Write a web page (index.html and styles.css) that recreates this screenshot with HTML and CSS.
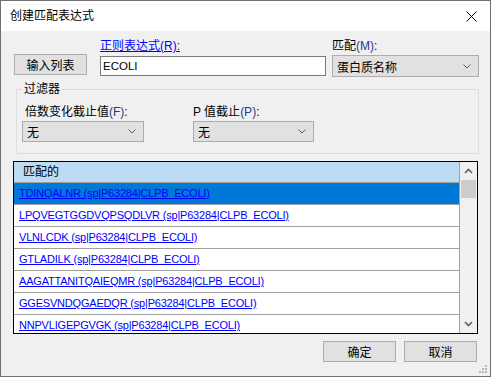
FILE: index.html
```html
<!DOCTYPE html>
<html lang="zh-CN">
<head>
    <meta charset="UTF-8">
    <title>创建匹配表达式</title>
    <link rel="stylesheet" href="styles.css">
</head>
<body>
    <div class="window">
        <!-- Title bar -->
        <div class="titlebar">
            <span class="title">创建匹配表达式</span>
            <span class="close">
                <svg width="11" height="11" viewBox="0 0 11 11"><path d="M0.5 0.5 L10.5 10.5 M10.5 0.5 L0.5 10.5" stroke="#000" stroke-width="1" fill="none"/></svg>
            </span>
        </div>

        <div class="body">
            <!-- Expression row -->
            <div class="top-row">
                <button class="btn btn-list">输入列表</button>
                <div class="field field-regex">
                    <label class="link">正则表达式(R):</label>
                    <input type="text" class="text-input" value="ECOLI">
                </div>
                <div class="field field-match">
                    <label>匹配<span class="key">(M)</span>:</label>
                    <div class="combo combo-match">
                        <span>蛋白质名称</span>
                        <svg class="chev" width="8" height="5" viewBox="0 0 8 5"><path d="M0.5 0.5 L4 4 L7.5 0.5" stroke="#606060" stroke-width="1" fill="none"/></svg>
                    </div>
                </div>
            </div>

            <!-- Filter group -->
            <fieldset class="filter">
                <legend>过滤器</legend>
                <div class="filter-row">
                    <div class="field field-fold">
                        <label>倍数变化截止值<span class="key">(F)</span>:</label>
                        <div class="combo combo-small">
                            <span>无</span>
                            <svg class="chev" width="8" height="5" viewBox="0 0 8 5"><path d="M0.5 0.5 L4 4 L7.5 0.5" stroke="#606060" stroke-width="1" fill="none"/></svg>
                        </div>
                    </div>
                    <div class="field field-pval">
                        <label>P 值截止<span class="key">(P)</span>:</label>
                        <div class="combo combo-small">
                            <span>无</span>
                            <svg class="chev" width="8" height="5" viewBox="0 0 8 5"><path d="M0.5 0.5 L4 4 L7.5 0.5" stroke="#606060" stroke-width="1" fill="none"/></svg>
                        </div>
                    </div>
                </div>
            </fieldset>

            <!-- Match list -->
            <div class="list">
                <div class="list-rows">
                    <div class="list-head">匹配的</div>
                    <div class="list-row selected"><a href="#">TDINQALNR (sp|P63284|CLPB_ECOLI)</a></div>
                    <div class="list-row"><a href="#">LPQVEGTGGDVQPSQDLVR (sp|P63284|CLPB_ECOLI)</a></div>
                    <div class="list-row"><a href="#">VLNLCDK (sp|P63284|CLPB_ECOLI)</a></div>
                    <div class="list-row"><a href="#">GTLADILK (sp|P63284|CLPB_ECOLI)</a></div>
                    <div class="list-row"><a href="#">AAGATTANITQAIEQMR (sp|P63284|CLPB_ECOLI)</a></div>
                    <div class="list-row"><a href="#">GGESVNDQGAEDQR (sp|P63284|CLPB_ECOLI)</a></div>
                    <div class="list-row"><a href="#">NNPVLIGEPGVGK (sp|P63284|CLPB_ECOLI)</a></div>
                </div>
                <div class="scrollbar">
                    <svg class="arrow" width="9" height="6" viewBox="0 0 9 6"><path d="M1 5 L4.5 1.5 L8 5" stroke="#606060" stroke-width="1.6" fill="none"/></svg>
                    <div class="thumb"></div>
                    <div class="track"></div>
                    <svg class="arrow" width="9" height="6" viewBox="0 0 9 6"><path d="M1 1 L4.5 4.5 L8 1" stroke="#606060" stroke-width="1.6" fill="none"/></svg>
                </div>
            </div>

            <div class="actions">
                <button class="btn">确定</button>
                <button class="btn">取消</button>
            </div>
        </div>

        <svg class="grip" width="9" height="9" viewBox="0 0 9 9">
            <rect x="6" y="0" width="2" height="2" fill="#b5b5b5"/>
            <rect x="3" y="3" width="2" height="2" fill="#b5b5b5"/>
            <rect x="6" y="3" width="2" height="2" fill="#b5b5b5"/>
            <rect x="0" y="6" width="2" height="2" fill="#b5b5b5"/>
            <rect x="3" y="6" width="2" height="2" fill="#b5b5b5"/>
            <rect x="6" y="6" width="2" height="2" fill="#b5b5b5"/>
        </svg>
    </div>
</body>
</html>
```

FILE: styles.css
```css
html, body {
    margin: 0;
    padding: 0;
}
body {
    font-family: "Liberation Sans", "Noto Sans CJK SC", sans-serif;
    font-size: 12px;
    color: #000;
    background: #f0f0f0;
}
.window {
    position: relative;
    width: 491px;
    height: 377px;
    box-sizing: border-box;
    border: 1px solid #707070;
    background: #f0f0f0;
    overflow: hidden;
}
.titlebar {
    display: flex;
    align-items: center;
    height: 30px;
    padding: 0 10px 0 9px;
    background: #fff;
}
.title {
    font-size: 12px;
    line-height: 16px;
}
.close {
    margin-left: auto;
    display: flex;
    margin-right: 3px;
}
.body {
    padding: 0 12px;
}
.top-row {
    display: flex;
    align-items: flex-start;
    padding-top: 7px;
}
.field {
    display: flex;
    flex-direction: column;
    flex-shrink: 0;
}
.field label {
    display: block;
    line-height: 16px;
    white-space: nowrap;
}
.key {
    color: #1d3a8c;
}
.link {
    color: #0000ff;
    text-decoration: underline;
}
.btn {
    font-family: inherit;
    font-size: 12px;
    width: 73px;
    height: 21px;
    padding: 0;
    background: #e1e1e1;
    border: 1px solid #adadad;
    border-radius: 0;
    color: #000;
    flex-shrink: 0;
}
.btn-list {
    margin: 16px 0 0 1px;
}
.field-regex {
    width: 226px;
    margin-left: 13px;
}
.text-input {
    box-sizing: border-box;
    width: 226px;
    height: 20px;
    margin-top: 2px;
    padding: 0 2px;
    border: 1px solid #7a7a7a;
    border-radius: 0;
    background: #fff;
    font-family: inherit;
    font-size: 11.5px;
    outline: none;
}
.field-match {
    width: 147px;
    margin-left: 6px;
}
.combo {
    box-sizing: border-box;
    display: flex;
    align-items: center;
    border: 1px solid #adadad;
    background: #e1e1e1;
    padding: 0 7px 0 4px;
}
.combo .chev {
    margin-left: auto;
}
.combo-match {
    height: 22px;
    margin-top: 1px;
}
.combo-small {
    height: 21px;
    margin-top: 1px;
}
.filter {
    box-sizing: border-box;
    width: 463px;
    margin: 4px 0 0 3px;
    padding: 7px 5px 11px 5px;
    border: 1px solid #dcdcdc;
}
.filter legend {
    padding: 0 2px;
    line-height: 16px;
}
.filter-row {
    display: flex;
}
.field-fold {
    width: 122px;
}
.field-fold label {
    padding-left: 3px;
}
.field-pval {
    width: 121px;
    margin-left: 49px;
}
.list {
    display: flex;
    width: 465px;
    height: 173px;
    margin-top: 7px;
    box-sizing: border-box;
    border: 1px solid #000;
    background: #fff;
    overflow: hidden;
}
.list-rows {
    flex: 1;
    border-right: 1px solid #a0a0a0;
}
.list-head {
    height: 20px;
    line-height: 20px;
    padding-left: 9px;
    background: #bcdcf4;
    border-bottom: 1px solid #a0a0a0;
}
.list-row {
    height: 21px;
    line-height: 21px;
    padding-left: 5px;
    border-bottom: 1px solid #a0a0a0;
    font-size: 11px;
    letter-spacing: -0.2px;
    white-space: nowrap;
}
.list-row a {
    color: #0000ff;
    text-decoration: underline;
}
.list-row.selected {
    background: #0078d7;
}
.scrollbar {
    width: 17px;
    display: flex;
    flex-direction: column;
    align-items: center;
    background: #f0f0f0;
}
.scrollbar .arrow {
    margin: 6px 0;
}
.scrollbar .arrow:last-child {
    margin: 0 0 6px;
}
.thumb {
    width: 15px;
    height: 18px;
    background: #cdcdcd;
}
.track {
    flex: 1;
}
.actions {
    display: flex;
    justify-content: flex-end;
    gap: 8px;
    margin-top: 7px;
    padding-right: 1px;
}
.grip {
    position: absolute;
    right: 2px;
    bottom: 2px;
}
```
